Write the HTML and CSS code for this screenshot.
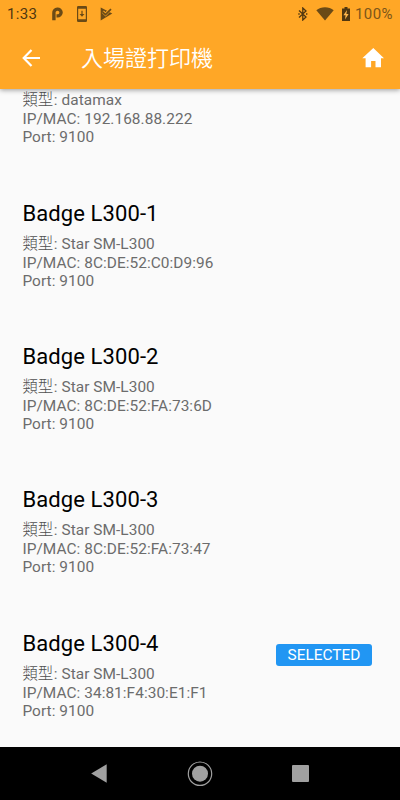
FILE: index.html
```html
<!DOCTYPE html>
<html lang="zh-Hant">
<head>
    <meta charset="UTF-8" />
    <meta name="viewport" content="width=device-width, initial-scale=1.0" />
    <title>入場證打印機</title>
    <link rel="stylesheet" href="styles.css">
</head>
<body>
  <header>
    <div class="status-bar">
      <span class="time">1:33</span>
      <svg class="icon-p" width="12" height="14" viewBox="0 0 12 14">
        <path fill="none" stroke="#6a4a16" stroke-width="3.400" d="M1.900 13.300V5.800a3.600 3.400 0 1 1 3.600 3.100H4.500" />
      </svg>
      <svg class="icon-update" width="10" height="16" viewBox="0 0 10 16">
        <path fill="#6a4a16" fill-rule="evenodd" d="M1.200 0h7.600q1.200 0 1.200 1.200v13.600q0 1.200-1.200 1.200H1.200Q0 16 0 14.800V1.200Q0 0 1.200 0zM1.200 2.700v10.600h7.600V2.700zM4.400 4.800h1.200v3.300h1.900L5 10.700 2.500 8.100h1.900z" />
      </svg>
      <svg class="icon-check" width="13" height="14" viewBox="0 0 13 14">
        <path fill="#6a4a16" d="M.7 .5L12.300 6.500 .7 13.500z" />
        <path fill="none" stroke="#ffa726" stroke-width="3" d="M2.800 4.700l2.700 2.600L11.500 1.200" />
        <path fill="none" stroke="#6a4a16" stroke-width="1.700" d="M2.500 4.900l3 2.700L11 2.200" />
      </svg>
      <span class="space"></span>
      <svg class="icon-bluetooth" width="10" height="14" viewBox="0 0 10 14">
        <path fill="none" stroke="#503710" stroke-width="1.300" d="M1 3.500l7 6.500-3.200 3V1L8 4 1 10.500" />
        <path fill="#503710" d="M.3 6.300h1.400v1.400H.3zM8 6.300h1.400v1.400H8z" />
      </svg>
      <svg class="icon-wifi" width="18" height="14" viewBox="0 0 18 14">
        <path fill="#6a4a16" d="M.3 3.200C5-.700 13-.700 17.700 3.200L9 13.500z" />
      </svg>
      <svg class="icon-battery" width="8" height="14" viewBox="0 0 8 14">
        <path fill="#503710" d="M2.500 0h3v1.400H8V14H0V1.400h2.500z" />
        <path fill="#ffb74d" d="M5 3L1.400 8.200h2.200L3 12.500l3.600-5.400H4.400z" />
      </svg>
      <span class="percent">100%</span>
    </div>
    <div class="app-bar">
      <svg class="back" width="18" height="18" viewBox="0 0 18 18">
        <path fill="none" stroke="#fff" stroke-width="2.200" d="M18 9H2M9.500 1L1.700 9l7.800 8" />
      </svg>
      <h1>入場證打印機</h1>
      <svg class="home" width="22" height="20" viewBox="0 0 22 20">
        <path fill="#fff" d="M11.300 0L.3 10.200h3.300v9h5.500V13h4.400v6.200h5.500v-9H22z" />
      </svg>
    </div>
  </header>

  <main>
    <div class="printer">
      <div class="info">
        <h2>&nbsp;</h2>
        <p class="type"><span>類型</span>: datamax</p>
        <p>IP/MAC: 192.168.88.222</p>
        <p>Port: 9100</p>
      </div>
    </div>
    <div class="printer">
      <div class="info">
        <h2>Badge L300-1</h2>
        <p class="type"><span>類型</span>: Star SM-L300</p>
        <p>IP/MAC: 8C:DE:52:C0:D9:96</p>
        <p>Port: 9100</p>
      </div>
    </div>
    <div class="printer">
      <div class="info">
        <h2>Badge L300-2</h2>
        <p class="type"><span>類型</span>: Star SM-L300</p>
        <p>IP/MAC: 8C:DE:52:FA:73:6D</p>
        <p>Port: 9100</p>
      </div>
    </div>
    <div class="printer">
      <div class="info">
        <h2>Badge L300-3</h2>
        <p class="type"><span>類型</span>: Star SM-L300</p>
        <p>IP/MAC: 8C:DE:52:FA:73:47</p>
        <p>Port: 9100</p>
      </div>
    </div>
    <div class="printer">
      <div class="info">
        <h2>Badge L300-4</h2>
        <p class="type"><span>類型</span>: Star SM-L300</p>
        <p>IP/MAC: 34:81:F4:30:E1:F1</p>
        <p>Port: 9100</p>
      </div>
      <span class="selected">SELECTED</span>
    </div>
  </main>

  <nav>
    <svg width="17" height="20" viewBox="0 0 17 20">
      <path fill="#a0a0a0" d="M15.700 .3v18.400L.2 9.500z" />
    </svg>
    <svg width="26" height="26" viewBox="0 0 26 26">
      <circle cx="13" cy="12.700" r="11.700" fill="none" stroke="#a0a0a0" stroke-width="1.200" />
      <circle cx="13" cy="12.700" r="8" fill="#a0a0a0" />
    </svg>
    <svg width="17" height="18" viewBox="0 0 17 18">
      <rect width="17" height="17" rx="1" fill="#a0a0a0" />
    </svg>
  </nav>
</body>
</html>
```

FILE: styles.css
```css
body {
    margin: 0;
    height: 800px;
    display: flex;
    flex-direction: column;
    overflow: hidden;
    background: #fafafa;
    font-family: Roboto, "Noto Sans CJK TC", sans-serif;
}

header {
    position: relative;
    flex: none;
    height: 89px;
    background: #ffa726;
    box-shadow: 0 1px 5px rgba(0, 0, 0, 0.4);
}

.status-bar {
    display: flex;
    align-items: center;
    height: 27px;
    padding: 0 7px;
    color: #503710;
    font-size: 15px;
}

.time {
    width: 45px;
    letter-spacing: 0.3px;
}

.icon-update {
    margin-left: 13px;
}

.icon-check {
    margin-left: 13px;
}

.space {
    flex: 1;
}

.icon-wifi {
    margin-left: 8px;
}

.icon-battery {
    margin-left: 8px;
}

.percent {
    width: 38px;
    margin-left: 5px;
    color: #7b5519;
    letter-spacing: 0.4px;
}

.app-bar {
    display: flex;
    align-items: center;
    height: 62px;
    padding: 0 16px 0 22px;
}

h1 {
    flex: 1;
    margin: 2px 0 0 41px;
    color: #fff;
    font-size: 22px;
    font-weight: 350;
    line-height: 32px;
}

main {
    flex: 1;
    min-height: 0;
    display: flex;
    flex-direction: column;
    justify-content: flex-end;
    overflow: hidden;
}

.printer {
    flex: none;
    display: flex;
    justify-content: space-between;
    align-items: flex-start;
    box-sizing: border-box;
    height: 143.33px;
    padding: 26px 28px 0 22.4px;
}

h2 {
    margin: 0 0 7px;
    color: #000;
    font-size: 22px;
    font-weight: 400;
    line-height: 28px;
    letter-spacing: 0.1px;
}

p {
    margin: 0;
    color: #6c6c6c;
    font-size: 15.4px;
    line-height: 18px;
    letter-spacing: 0.06px;
}

.type {
    line-height: 19px;
}

.type span {
    margin-right: 0.5px;
    color: #505050;
    font-weight: 300;
}

.selected {
    width: 96px;
    height: 22px;
    margin-top: 14px;
    border-radius: 3px;
    background: #2196f3;
    color: #fff;
    font-size: 15.4px;
    line-height: 23px;
    text-align: center;
}

nav {
    flex: none;
    display: flex;
    justify-content: center;
    align-items: center;
    gap: 79px;
    height: 53px;
    background: #000;
}
```
